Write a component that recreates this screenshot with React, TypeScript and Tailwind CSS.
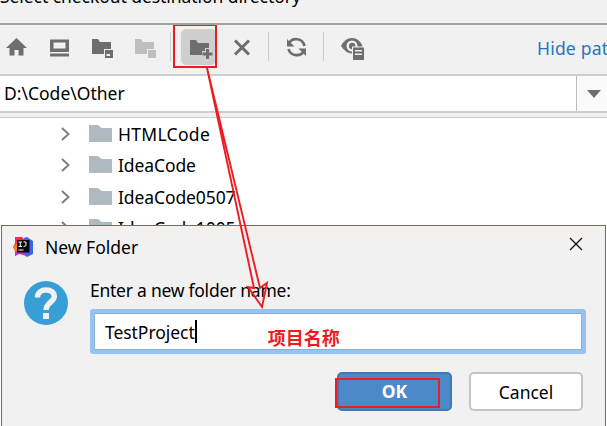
import React from "react";

function Icon({ className, children }: { className: string; children: React.ReactNode }) {
  return (
    <svg width="26" height="26" viewBox="0 0 26 26" fill="#6e6e6e" className={`shrink-0 ${className}`}>
      {children}
    </svg>
  );
}

function Separator({ className }: { className: string }) {
  return <div className={`h-[29px] w-px shrink-0 bg-[#cdcdcd] ${className}`} />;
}

const folderPath = "M2 4h6l2 3h11v12H2z";

function Toolbar() {
  return (
    <div className="flex h-[49px] items-start overflow-hidden pt-[7px]">
      <Icon className="ml-1 mt-[3px]">
        <path d="M12.500 3 23 13h-3.500v7.500h-5v-5.500h-4v5.500h-5V13H2z" />
      </Icon>
      <Icon className="ml-[18px] mt-[3px]">
        <path fillRule="evenodd" d="M2 4.500h19V17H2zM5.500 7.500v6h12v-6zM2 18.500h19v3H2z" />
      </Icon>
      <Icon className="ml-4 mt-[3px]">
        <path d={folderPath} />
        <path fill="#f1f1f1" d="M14 14h10v10H14z" />
        <path fillRule="evenodd" d="M15 15h8v8h-8zM16.500 19v2h3.500v-2z" />
      </Icon>
      <Icon className="ml-[17px] mt-[3px]">
        <path fill="#bfbfbf" d={folderPath} />
        <path fill="#f1f1f1" d="M14 14h10v10H14z" />
        <path fill="#bfbfbf" d="M15 15h8v8h-8z" />
      </Icon>
      <Separator className="ml-[11px]" />
      <div className="relative -mt-[3px] ml-[10px] flex h-9 w-[35px] shrink-0 justify-center rounded-[5px] bg-[#cfcfcf] pt-[6px]">
        <Icon className="ml-[5px]">
          <path d="M2 5h6l2 3h11v12H2z" />
          <path fill="#cfcfcf" d="M17 13h5v3h4v6h-4v4h-5v-4h-3v-6h3z" />
          <path d="M18 14h3v3.500h3.500v3H21V24h-3v-3.500h-3.500v-3H18z" />
        </Icon>
        <div className="absolute -left-2 -top-[5px] h-[44px] w-[44px] border-2 border-[#ed1c24]" />
      </div>
      <Icon className="ml-[14px] mt-[3px]">
        <path d="M5 5.500l14 14M19 5.500l-14 14" fill="none" stroke="#6e6e6e" strokeWidth="3" />
      </Icon>
      <Separator className="ml-[12px]" />
      <Icon className="ml-[15px] mt-[3px]">
        <path d="M4.500 9A8.500 8.500 0 0 1 20.500 11M20.500 15A8.500 8.500 0 0 1 4.500 14" fill="none" stroke="#6e6e6e" strokeWidth="2.700" />
        <path d="M3 4v7.500h7.500zM22 21v-7.500h-7.500z" />
      </Icon>
      <Separator className="ml-[13px]" />
      <Icon className="ml-[15px] mt-[3px]">
        <path fillRule="evenodd" d="M2 11Q6 3 13 3T23.500 11Q19 18.500 13 18.500T2 11zM13 5.500a5.500 5.500 0 1 0 0 11 5.500 5.500 0 0 0 0-11z" />
        <circle cx="13.200" cy="11" r="3.200" />
        <path fill="#f1f1f1" d="M13 11.500h13V26H13z" />
        <path fillRule="evenodd" d="M14 12.500h11V25H14zM16 15v1.500h7V15zM16 18.500V20h7v-1.500z" />
      </Icon>
      <span className="ml-[172px] mt-[3px] whitespace-nowrap text-[17.500px] leading-[27px] tracking-[0.200px] text-[#2675bf]">Hide path</span>
    </div>
  );
}

function FolderRow({ name }: { name: string }) {
  return (
    <div className="flex h-[31.500px] shrink-0 items-center pl-[60px]">
      <svg width="12" height="16" viewBox="0 0 12 16" className="shrink-0">
        <path d="M2 2l6.500 6L2 14" fill="none" stroke="#7f7f7f" strokeWidth="2" />
      </svg>
      <svg width="24" height="20" viewBox="0 0 24 20" className="ml-[17px] shrink-0">
        <path d="M0 1h9l3.500 3H23v14H0z" fill="#afb9c0" />
      </svg>
      <span className={`ml-[5px] whitespace-nowrap text-[17.500px] leading-[28px] ${name === "HTMLCode" ? "tracking-[0.300px]" : "tracking-[-0.100px]"}`}>{name}</span>
    </div>
  );
}

function IdeaLogo() {
  return (
    <svg width="21" height="21" viewBox="0 0 21 21" className="shrink-0">
      <path d="M2 1h7l4 4-3 13-3-1-5 3V14l-2-3 2-4z" fill="#fe2857" />
      <path d="M0 11l4-4 5 9-6 1z" fill="#fc801d" />
      <path d="M11 2l3-1 6 4v13l-6 3-5-4z" fill="#3c63ef" />
      <path d="M2 15h7l5 5-8-2-4 2z" fill="#c236c6" />
      <path d="M4 4h12.500v12.500H4z" fill="#080808" />
      <path d="M5.500 6h3.500M7.250 6v4.500M5.500 10.500h3.500M10.500 6h2.500v3q0 1.500-2.500 1.500M5.500 14h5" fill="none" stroke="#fff" strokeWidth="1" />
    </svg>
  );
}

function Dialog() {
  return (
    <div className="absolute left-px top-[225px] h-[240px] w-[605px] border border-[#1883d7] bg-[#f1f1f1]">
      <div className="flex h-[41px] items-center pl-[11px] pr-[22px]">
        <IdeaLogo />
        <span className="ml-[11px] text-[17.500px] leading-7">New Folder</span>
        <svg width="14" height="14" viewBox="0 0 14 14" className="mb-[5px] ml-auto">
          <path d="M1 1l12 12M13 1L1 13" stroke="#111" strokeWidth="1.300" />
        </svg>
      </div>
      <div className="flex pl-[22px]">
        <svg width="44" height="44" viewBox="0 0 44 44" className="mt-[14px] shrink-0">
          <circle cx="22" cy="22" r="22" fill="#389fd6" />
          <path d="M13.500 16.500C13.500 11.500 17.500 9 22 9C27 9 30.300 11.500 30.300 15.500C30.300 21 22 21.500 22 29" fill="none" stroke="#f1f1f1" strokeWidth="5.400" />
          <path d="M19 32h6v6h-6z" fill="#f1f1f1" />
        </svg>
        <div className="ml-[22px] w-[496px]">
          <div className="mt-[9px] text-[17.500px] leading-7 tracking-[-0.250px]">Enter a new folder name:</div>
          <div className="mt-[5px] flex h-[45px] items-center rounded-[3px] border-4 border-[#97c3f3] bg-white pl-[11px] shadow-[inset_0_0_0_1px_#87afda]">
            <span className="text-[17.500px] leading-7 tracking-[-0.050px]">TestProject</span>
            <span className="-mt-px h-[23px] w-[2px] bg-black" />
            <span className="ml-[71px] mt-[10px] text-[18px] font-bold leading-7 text-[#ed1c24] [font-family:'Noto_Sans_CJK_SC',sans-serif]">项目名称</span>
          </div>
          <div className="mt-[18px] flex justify-end gap-[17px] pr-[3px]">
            <div className="relative flex h-[39px] w-[115px] items-center justify-center rounded-[5px] border-2 border-[#3e78b7] bg-[#4c89ca] text-[17.500px] font-bold text-white">
              OK
              <div className="absolute -left-[4px] top-[4px] h-[30px] w-[105px] border-2 border-[#ed1c24]" />
            </div>
            <div className="flex h-[39px] w-[114px] items-center justify-center rounded-[5px] border-2 border-[#c4c4c4] bg-white pt-[2px] text-[17.500px]">Cancel</div>
          </div>
        </div>
      </div>
    </div>
  );
}

export default function App() {
  return (
    <div className="relative h-[426px] w-[607px] overflow-hidden bg-[#f1f1f1] text-black [font-family:'Noto_Sans',sans-serif]">
      <div className="h-[25px] overflow-hidden border-b-2 border-[#a3a3a3]">
        <div className="-mt-[18px] whitespace-nowrap text-[17.500px] leading-7 tracking-[-0.060px]">Select checkout destination directory</div>
      </div>
      <Toolbar />
      <div className="flex h-[39px] border-y-2 border-[#cdcdcd] bg-white">
        <div className="flex flex-1 items-center pl-1 text-[17.500px]">D:\Code\Other</div>
        <div className="flex w-[31px] items-center border-l border-[#bdbdbd] bg-[#fafafa] pl-[10px]">
          <svg width="14" height="8" viewBox="0 0 14 8"><path d="M0 0h14L7 8z" fill="#6e6e6e" /></svg>
        </div>
      </div>
      <div className="mt-1 h-[310px] border-t border-[#cdcdcd] bg-white">
        {["HTMLCode", "IdeaCode", "IdeaCode0507", "IdeaCode1005"].map((name) => <FolderRow key={name} name={name} />)}
      </div>
      <Dialog />
      <svg width="607" height="426" className="absolute left-0 top-0">
        <path d="M207 68L254 288l-6-1 14 20 5-24-7 5z" fill="none" stroke="#ed1c24" strokeWidth="1.900" />
      </svg>
    </div>
  );
}
